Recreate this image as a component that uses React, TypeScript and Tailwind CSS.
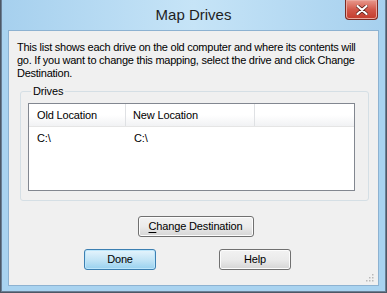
const font = { fontFamily: '"Liberation Sans", Arial, sans-serif' };

const WinButton = ({
  children,
  width,
  primary,
}: {
  children: React.ReactNode;
  width: string;
  primary?: boolean;
}) => (
  <button
    className={
      primary
        ? `${width} h-[21px] rounded-[3px] border border-[#3c7fb1] bg-gradient-to-b from-[#e5f4fc] via-[#c4e5f6] to-[#98d1ef] text-[11px] tracking-[-0.15px] text-black shadow-[inset_0_0_0_1px_#bde6fb]`
        : `${width} h-[21px] rounded-[3px] border border-[#707070] bg-gradient-to-b from-[#f2f2f2] via-[#ebebeb] to-[#d5d5d5] text-[11px] tracking-[-0.15px] text-black shadow-[inset_0_0_0_1px_#fcfcfc]`
    }
  >
    {children}
  </button>
);

export default function App() {
  return (
    <div className="w-[387px] h-[293px] bg-[#4d5866] pl-[1px] pr-[1px] overflow-hidden" style={font}>
      <div className="h-[292px] bg-[#a9d3f0] border border-[#6a7f95] border-t-0 flex flex-col">
        {/* title bar */}
        <div className="relative h-[30px] flex items-center justify-center bg-gradient-to-r from-[#a6d0ee] via-[#c6e4f7] to-[#a6d0ee]">
          <span className="text-[15px] text-[#1e1e1e] mt-[1px]">Map Drives</span>
          <div className="absolute right-[7px] top-0 w-[33px] h-[20px] rounded-b-[4px] border border-t-0 border-[#7b2a22] bg-gradient-to-b from-[#e8998d] via-[#d2584a] to-[#c23a2b] flex items-center justify-center shadow-[inset_0_0_0_1px_#eba79d]">
            <svg width="12" height="10" viewBox="0 0 12 10">
              <path d="M1.5 1 L10.5 9 M10.5 1 L1.5 9" stroke="#5a1c16" strokeWidth="3.6" strokeLinecap="round" />
              <path d="M1.5 1 L10.5 9 M10.5 1 L1.5 9" stroke="#ffffff" strokeWidth="2.2" strokeLinecap="round" />
            </svg>
          </div>
        </div>
        {/* client area */}
        <div className="mx-[6px] h-[256px] border border-[#8db2d1] bg-[#f0f0f0] relative flex flex-col text-[11px] tracking-[-0.15px] text-black">
          <div className="pl-[8px] pt-[10px] leading-[13px] tracking-[-0.25px]">
            <div>This list shows each drive on the old computer and where its contents will</div>
            <div>go. If you want to change this mapping, select the drive and click Change</div>
            <div>Destination.</div>
          </div>
          <fieldset className="ml-[11px] mt-[5px] w-[349px] h-[116px] border border-[#d5dfe5] rounded-[3px] pl-[7px] pr-0">
            <legend className="ml-[3px] px-[2px] leading-[13px]">Drives</legend>
            <div className="mt-[5px] w-[327px] h-[88px] border border-[#828790] bg-white">
              <div className="h-[23px] flex bg-gradient-to-b from-white via-white to-[#f1f2f4] border-b border-[#e5e5e5]">
                <div className="w-[97px] flex items-center pl-[8px] border-r border-[#dfe1e4]">Old Location</div>
                <div className="w-[129px] flex items-center pl-[7px] border-r border-[#dfe1e4]">New Location</div>
                <div className="flex-1" />
              </div>
              <div className="flex h-[18px] items-center mt-[2px]">
                <div className="w-[97px] pl-[8px]">C:\</div>
                <div className="pl-[8px]">C:\</div>
              </div>
            </div>
          </fieldset>
          <div className="flex justify-center mt-[15px] pl-[4px]">
            <WinButton width="w-[116px]">
              <span className="underline underline-offset-2">C</span>hange Destination
            </WinButton>
          </div>
          <div className="flex mt-[12px] pl-[75px] gap-[63px]">
            <WinButton width="w-[72px]" primary>
              Done
            </WinButton>
            <WinButton width="w-[72px]">Help</WinButton>
          </div>
          <div className="absolute right-[4px] bottom-[3px]">
            <svg width="9" height="9" viewBox="0 0 9 9">
              <g fill="#b9b9b9">
                <rect x="7" y="1" width="1.5" height="1.5" />
                <rect x="4" y="4" width="1.5" height="1.5" />
                <rect x="7" y="4" width="1.5" height="1.5" />
                <rect x="1" y="7" width="1.5" height="1.5" />
                <rect x="4" y="7" width="1.5" height="1.5" />
                <rect x="7" y="7" width="1.5" height="1.5" />
              </g>
            </svg>
          </div>
        </div>
      </div>
    </div>
  );
}
